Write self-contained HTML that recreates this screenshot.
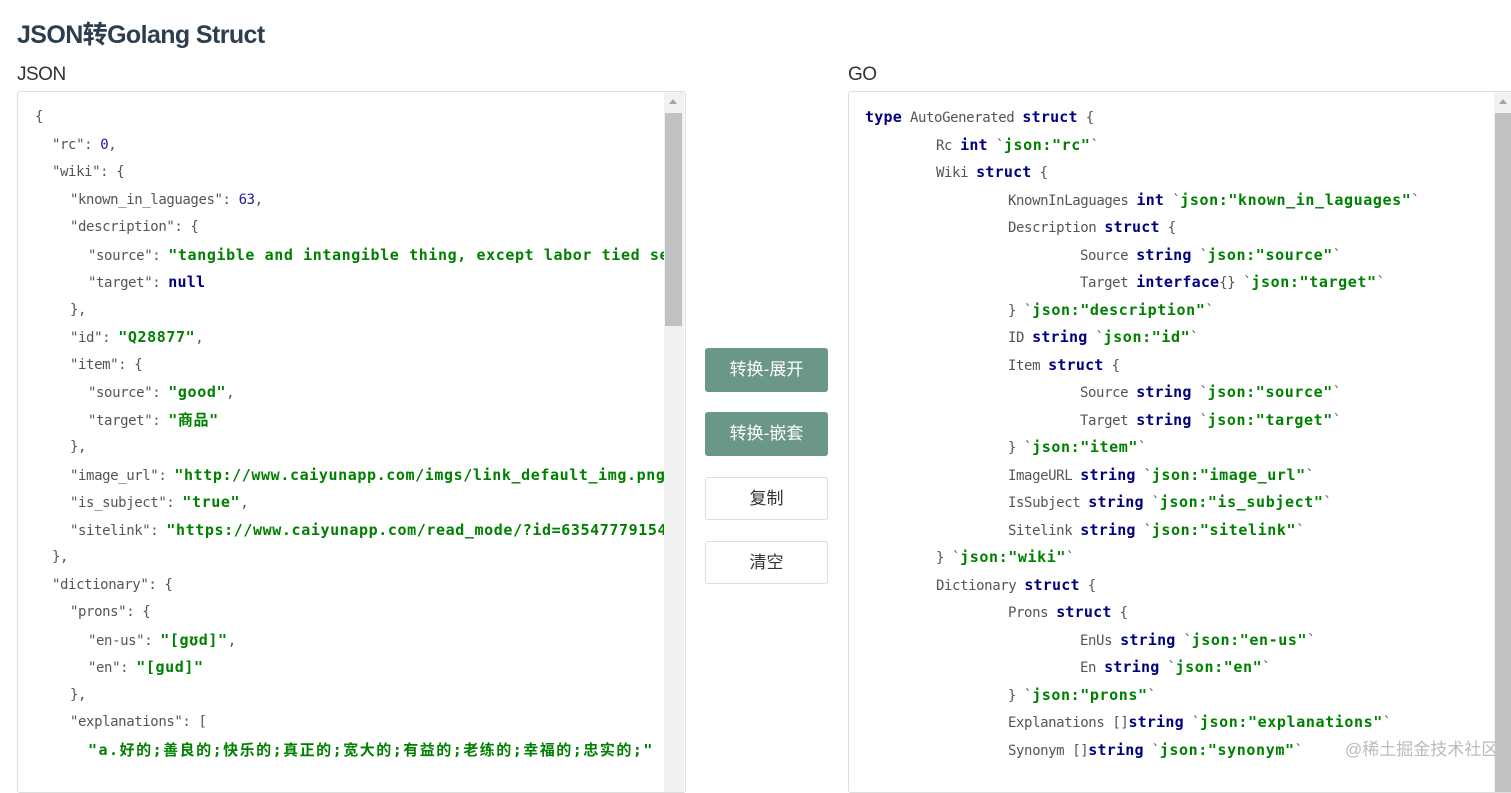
<!DOCTYPE html>
<html><head><meta charset="utf-8"><style>
body{margin:0;width:1511px;height:763px;overflow:hidden;background:#fff;font-family:"Liberation Sans","Noto Sans CJK SC",sans-serif;position:relative}
h1{position:absolute;left:17px;top:15px;margin:0;font-size:25px;font-weight:bold;color:#2c3e50;letter-spacing:-0.6px}
.lab{position:absolute;top:64px;font-size:19px;color:#333;letter-spacing:-0.5px}
.panel{position:absolute;top:91px;height:700px;border:1px solid #ddd;border-radius:3px;overflow:hidden;background:#fff}
.sb{position:absolute;top:0;width:20px;height:100%;background:#f1f1f1}
.thumb{position:absolute;left:1px;width:17px;background:#c1c1c1}
.arr{position:absolute;left:5px;top:7px;width:0;height:0;border-left:4px solid transparent;border-right:4px solid transparent;border-bottom:5px solid #a3a3a3}
.ln{position:absolute;white-space:pre;font-family:"DejaVu Sans Mono","Liberation Mono","Noto Sans CJK SC",monospace;font-size:14px;line-height:27.5px;color:#555;letter-spacing:-0.4px;top:0}
.s{color:#008000;font-weight:bold;font-size:15px;letter-spacing:0.6px}
.n{color:#1a1aa6}
.k{color:#000080;font-weight:bold;font-size:15px;letter-spacing:0.2px}
.btn{position:absolute;left:705px;width:123px;height:44px;border-radius:3px;font-size:17px;text-align:center;line-height:44px;box-sizing:border-box}
.g{background:#6b968a;color:#fff}
.w{background:#fff;border:1px solid #ddd;color:#333;height:43px;line-height:41px}
.wm{position:absolute;left:1345px;top:735px;font-size:17px;color:#bbb}
.cj{letter-spacing:1.5px}
</style></head><body>
<h1>JSON转Golang Struct</h1>
<div class="lab" style="left:17px">JSON</div>
<div class="lab" style="left:848px">GO</div>

<div class="panel" style="left:17px;width:667px">
<div class="sb" style="left:646px"><div class="arr"></div><div class="thumb" style="top:21px;height:213px"></div></div>
<div style="position:absolute;left:0;top:12px;width:646px;height:690px;overflow:hidden">
<div class="ln" style="left:17px;top:0">{</div>
<div class="ln" style="left:34px;top:27.5px">"rc": <span class="n">0</span>,</div>
<div class="ln" style="left:34px;top:55px">"wiki": {</div>
<div class="ln" style="left:52px;top:82.5px">"known_in_laguages": <span class="n">63</span>,</div>
<div class="ln" style="left:52px;top:110px">"description": {</div>
<div class="ln" style="left:70px;top:137.5px">"source": <span class="s">"tangible and intangible thing, except labor tied services"</span>,</div>
<div class="ln" style="left:70px;top:165px">"target": <span class="k">null</span></div>
<div class="ln" style="left:52px;top:192.5px">},</div>
<div class="ln" style="left:52px;top:220px">"id": <span class="s">"Q28877"</span>,</div>
<div class="ln" style="left:52px;top:247.5px">"item": {</div>
<div class="ln" style="left:70px;top:275px">"source": <span class="s">"good"</span>,</div>
<div class="ln" style="left:70px;top:302.5px">"target": <span class="s">"商品"</span></div>
<div class="ln" style="left:52px;top:330px">},</div>
<div class="ln" style="left:52px;top:357.5px">"image_url": <span class="s">"http://www.caiyunapp.com/imgs/link_default_img.png"</span>,</div>
<div class="ln" style="left:52px;top:385px">"is_subject": <span class="s">"true"</span>,</div>
<div class="ln" style="left:52px;top:412.5px">"sitelink": <span class="s">"https://www.caiyunapp.com/read_mode/?id=6354777915466339550246c5"</span></div>
<div class="ln" style="left:34px;top:440px">},</div>
<div class="ln" style="left:34px;top:467.5px">"dictionary": {</div>
<div class="ln" style="left:52px;top:495px">"prons": {</div>
<div class="ln" style="left:70px;top:522.5px">"en-us": <span class="s">"[gʊd]"</span>,</div>
<div class="ln" style="left:70px;top:550px">"en": <span class="s">"[gud]"</span></div>
<div class="ln" style="left:52px;top:577.5px">},</div>
<div class="ln" style="left:52px;top:605px">"explanations": [</div>
<div class="ln" style="left:70px;top:632.5px"><span class="s cj">"a.好的;善良的;快乐的;真正的;宽大的;有益的;老练的;幸福的;忠实的;"</span></div>
</div></div>

<div class="btn g" style="top:348px">转换-展开</div>
<div class="btn g" style="top:412px">转换-嵌套</div>
<div class="btn w" style="top:477px">复制</div>
<div class="btn w" style="top:541px">清空</div>

<div class="panel" style="left:848px;width:680px">
<div class="sb" style="left:645px"><div class="arr"></div><div class="thumb" style="top:21px;height:700px"></div></div>
<div style="position:absolute;left:0;top:12px;width:645px;height:690px;overflow:hidden">
<div class="ln" style="left:16px;top:0"><span class="k">type</span> AutoGenerated <span class="k">struct</span> {</div>
<div class="ln" style="left:87px;top:27.5px">Rc <span class="k">int</span> `<span class="s">json:"rc"</span>`</div>
<div class="ln" style="left:87px;top:55px">Wiki <span class="k">struct</span> {</div>
<div class="ln" style="left:159px;top:82.5px">KnownInLaguages <span class="k">int</span> `<span class="s">json:"known_in_laguages"</span>`</div>
<div class="ln" style="left:159px;top:110px">Description <span class="k">struct</span> {</div>
<div class="ln" style="left:231px;top:137.5px">Source <span class="k">string</span> `<span class="s">json:"source"</span>`</div>
<div class="ln" style="left:231px;top:165px">Target <span class="k">interface</span>{} `<span class="s">json:"target"</span>`</div>
<div class="ln" style="left:159px;top:192.5px">} `<span class="s">json:"description"</span>`</div>
<div class="ln" style="left:159px;top:220px">ID <span class="k">string</span> `<span class="s">json:"id"</span>`</div>
<div class="ln" style="left:159px;top:247.5px">Item <span class="k">struct</span> {</div>
<div class="ln" style="left:231px;top:275px">Source <span class="k">string</span> `<span class="s">json:"source"</span>`</div>
<div class="ln" style="left:231px;top:302.5px">Target <span class="k">string</span> `<span class="s">json:"target"</span>`</div>
<div class="ln" style="left:159px;top:330px">} `<span class="s">json:"item"</span>`</div>
<div class="ln" style="left:159px;top:357.5px">ImageURL <span class="k">string</span> `<span class="s">json:"image_url"</span>`</div>
<div class="ln" style="left:159px;top:385px">IsSubject <span class="k">string</span> `<span class="s">json:"is_subject"</span>`</div>
<div class="ln" style="left:159px;top:412.5px">Sitelink <span class="k">string</span> `<span class="s">json:"sitelink"</span>`</div>
<div class="ln" style="left:87px;top:440px">} `<span class="s">json:"wiki"</span>`</div>
<div class="ln" style="left:87px;top:467.5px">Dictionary <span class="k">struct</span> {</div>
<div class="ln" style="left:159px;top:495px">Prons <span class="k">struct</span> {</div>
<div class="ln" style="left:231px;top:522.5px">EnUs <span class="k">string</span> `<span class="s">json:"en-us"</span>`</div>
<div class="ln" style="left:231px;top:550px">En <span class="k">string</span> `<span class="s">json:"en"</span>`</div>
<div class="ln" style="left:159px;top:577.5px">} `<span class="s">json:"prons"</span>`</div>
<div class="ln" style="left:159px;top:605px">Explanations []<span class="k">string</span> `<span class="s">json:"explanations"</span>`</div>
<div class="ln" style="left:159px;top:632.5px">Synonym []<span class="k">string</span> `<span class="s">json:"synonym"</span>`</div>
</div></div>
<div class="wm">@稀土掘金技术社区</div>
</body></html>
